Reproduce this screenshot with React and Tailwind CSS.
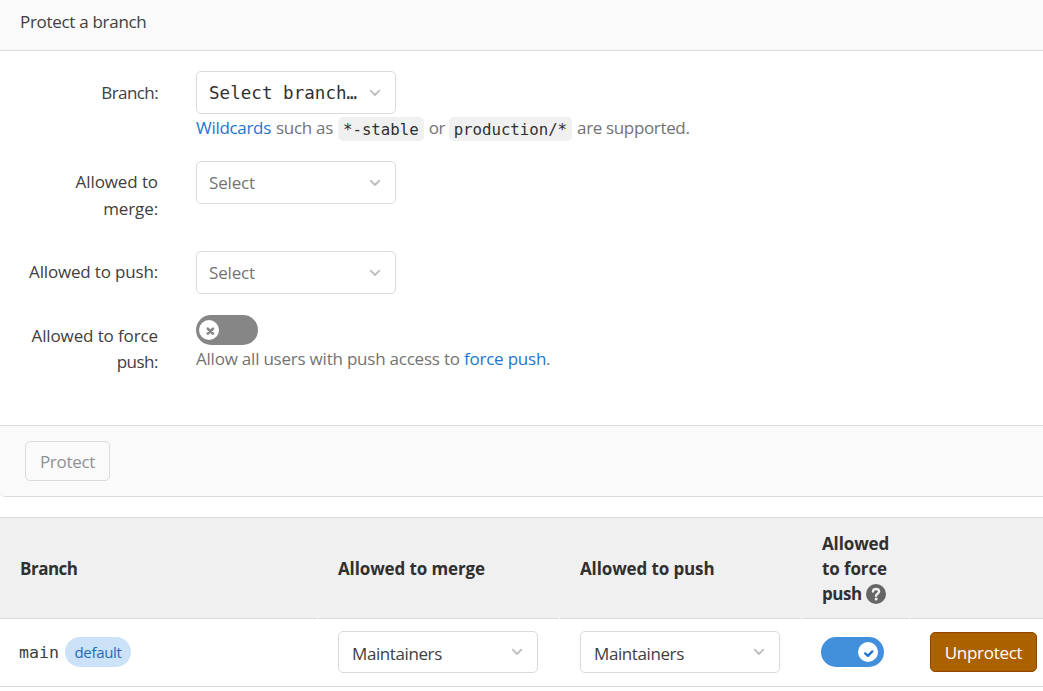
import React from "react";

const sans = "font-['Open_Sans','Noto_Sans',sans-serif]";
const mono = "font-['DejaVu_Sans_Mono',monospace]";

function Chevron() {
  return (
    <svg width="12" height="8" viewBox="0 0 12 8" fill="none" stroke="#bfbfbf" strokeWidth="1.9" strokeLinecap="round" strokeLinejoin="round" className="shrink-0">
      <path d="M1.7 1.7 6 6l4.3-4.3" />
    </svg>
  );
}

function Select({ children, className = "", textClass = "" }) {
  return (
    <button type="button" className={`flex w-[200px] items-center justify-between rounded-[5px] border border-[#dbdbdb] bg-white pr-[14px] text-left ${className}`}>
      <span className={`whitespace-nowrap ${textClass}`}>{children}</span>
      <Chevron />
    </button>
  );
}

function Row({ label, className = "", labelClass = "", children }) {
  return (
    <div className={`flex ${className}`}>
      <div className={`w-[158px] shrink-0 whitespace-nowrap text-right text-[#404040] ${labelClass}`}>{label}</div>
      <div className="ml-[38px]">{children}</div>
    </div>
  );
}

function Code({ children }) {
  return (
    <code className={`block h-6 rounded-[5px] bg-[#f0f0f0] px-[5px] pt-px text-[15.75px] leading-[23px] tracking-[-0.03px] text-[#303030] ${mono}`}>{children}</code>
  );
}

export default function App() {
  return (
    <div className={`h-[691px] w-[1043px] overflow-hidden bg-white text-[17px] tracking-[-0.3px] text-[#404040] ${sans}`}>
      <section className="h-[497px] overflow-hidden rounded-bl-[5px] border-b border-[#dbdbdb]">
        <header className="flex h-[51px] items-start border-b border-[#dbdbdb] bg-[#fafafa] pl-5 pt-[9px] leading-[26px]">Protect a branch</header>
        <div className="h-[374px] pt-5">
          <Row label="Branch:" className="h-[90px]" labelClass="pt-[9px] leading-[26px] tracking-[-0.6px]">
            <Select className={`h-[43px] pl-3 text-[17.5px] tracking-[0.05px] text-[#303030] ${mono}`} textClass="pt-px">Select branch…</Select>
            <div className="flex h-7 items-center whitespace-nowrap text-[#737373]">
              <a className="w-[76px] text-[#1f75cb]">Wildcards</a>
              <span className="ml-[4px] w-[57px]">such as</span>
              <span className="ml-[5px] mt-[2px] flex"><Code>*-stable</Code></span>
              <span className="ml-[5px] w-[16px]">or</span>
              <span className="ml-[4px] mt-[2px] flex"><Code>production/*</Code></span>
              <span className="ml-[5px] tracking-[-0.35px]">are supported.</span>
            </div>
          </Row>
          <Row label={<>Allowed to<br />merge:</>} className="h-[90px]" labelClass="pt-[7px] leading-[27px] tracking-[-0.1px]">
            <Select className="h-[43px] pl-3 tracking-[-0.15px] text-[#737373]">Select</Select>
          </Row>
          <Row label="Allowed to push:" className="h-16" labelClass="pt-2 leading-[26px] tracking-[-0.17px]">
            <Select className="h-[43px] pl-3 tracking-[-0.15px] text-[#737373]">Select</Select>
          </Row>
          <Row label={<>Allowed to force<br /><span className="tracking-[-0.5px]">push:</span></>} labelClass="pt-2 leading-[26px] tracking-[-0.12px]">
            <button type="button" aria-label="Allow force push" className="flex h-[30px] w-[62px] items-center rounded-full bg-[#868686] pl-[3px]">
              <span className="flex size-5 items-center justify-center rounded-full bg-white">
                <svg width="20" height="20" viewBox="0 0 20 20" fill="none" stroke="#868686" strokeWidth="2.6" strokeLinecap="round">
                  <path d="m8.8 8.7 5.2 4.9M14 8.7l-5.2 4.9" />
                </svg>
              </span>
            </button>
            <div className="whitespace-nowrap pt-px leading-[26px] tracking-[-0.22px] text-[#737373]">
              Allow all users with push access to <a className="text-[#1f75cb]">force push</a>.
            </div>
          </Row>
        </div>
        <footer className="flex h-[72px] items-start border-t border-[#dbdbdb] bg-[#fafafa] pl-[25px] pt-[15px]">
          <button type="button" className="flex h-10 w-[85px] items-center justify-center rounded-[5px] border border-[#dbdbdb] pt-px text-[#919191]">Protect</button>
        </footer>
      </section>

      <section className="mt-5">
        <div className="grid h-[101px] grid-cols-[317px_242px_242px_108px_134px] items-center border-t border-[#dbdbdb] bg-[#f0f0f0] font-bold leading-[25px] tracking-[-0.12px] text-[#303030]">
          <div className="pl-5 tracking-[-0.5px]">Branch</div>
          <div className="pl-[21px]">Allowed to merge</div>
          <div className="pl-[21px]">Allowed to push</div>
          <div className="flex flex-col pl-[21px]">
            <span>Allowed</span>
            <span>to force</span>
            <span className="flex items-center">
              <span className="w-11 tracking-[-0.5px]">push</span>
              <svg width="20" height="20" viewBox="0 0 20 20" className="mt-px">
                <circle cx="10" cy="10" r="10" fill="#666" />
                <path d="M7 7.5C7.1 5.9 8.3 5 10 5c1.8 0 3.1 1 3.1 2.6 0 2.1-3 2.2-3 4.2" fill="none" stroke="#f0f0f0" strokeWidth="2.4" strokeLinecap="round" />
                <circle cx="10.1" cy="14.9" r="1.5" fill="#f0f0f0" />
              </svg>
            </span>
          </div>
          <div />
        </div>
        <div className="grid h-px grid-cols-[317px_241px_241px_107px_133px] gap-x-px bg-white">
          <div className="bg-[#dbdbdb]" />
          <div className="bg-[#dbdbdb]" />
          <div className="bg-[#dbdbdb]" />
          <div className="bg-[#dbdbdb]" />
          <div className="bg-[#dbdbdb]" />
        </div>
        <div className="grid h-[68px] grid-cols-[317px_242px_242px_108px_134px] border-b border-[#dbdbdb]">
          <div className="flex items-center gap-[6px] pb-px pl-[19px]">
            <span className={`pt-[2px] text-[16.625px] tracking-normal ${mono}`}>main</span>
            <span className="flex h-[30px] w-[66px] items-center justify-center rounded-full bg-[#cbe2f9] text-[15px] text-[#1f6bb8]">default</span>
          </div>
          <div className="pl-[21px] pt-3"><Select className="h-[42px] pl-[13px] tracking-[-0.4px]" textClass="pt-[3px]">Maintainers</Select></div>
          <div className="pl-[21px] pt-3"><Select className="h-[42px] pl-[13px] tracking-[-0.4px]" textClass="pt-[3px]">Maintainers</Select></div>
          <div className="flex items-center pb-px pl-5">
            <button type="button" aria-label="Force push allowed" className="flex h-[30px] w-[63px] items-center justify-end rounded-full bg-[#428fdc] pr-[6px]">
              <span className="flex size-5 items-center justify-center rounded-full bg-white">
                <svg width="20" height="20" viewBox="0 0 20 20" fill="none" stroke="#1f75cb" strokeWidth="2.4" strokeLinecap="round" strokeLinejoin="round">
                  <path d="m7.2 11.4 2.7 2.4 4.4-4.4" />
                </svg>
              </span>
            </button>
          </div>
          <div className="flex items-center pb-px pl-[21px]">
            <button type="button" className="flex h-10 w-[107px] items-center justify-center rounded-[5px] border border-[#8f4700] bg-[#ab6100] pt-px text-white">Unprotect</button>
          </div>
        </div>
      </section>
    </div>
  );
}
